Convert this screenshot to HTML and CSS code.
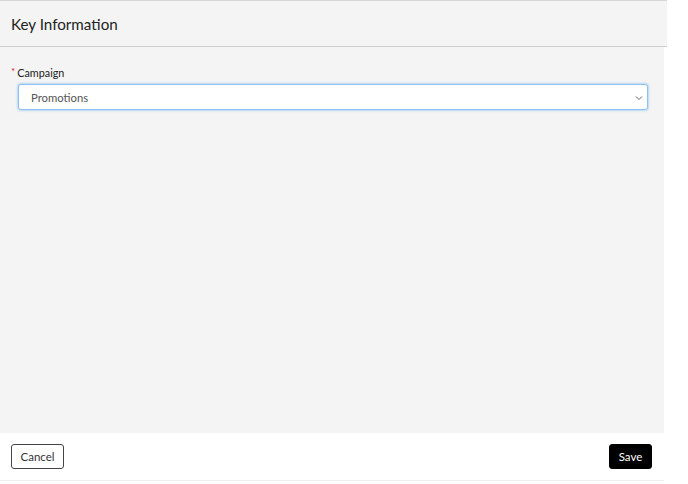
FILE: index.html
```html
<!DOCTYPE html>
<html>
<head>
<meta charset="utf-8">
<link rel="stylesheet" href="styles.css">
</head>
<body>
<div class="panel">
  <div class="header"><h1 class="title">Key Information</h1></div>
  <div class="content">
    <div class="field">
      <label class="label"><span class="req">*</span>Campaign</label>
      <div class="select">
        <span class="value">Promotions</span>
        <svg class="chev" width="8" height="6" viewBox="0 0 8 6"><path d="M1 1.5 L4 4.5 L7 1.5" fill="none" stroke="#666" stroke-width="1"/></svg>
      </div>
    </div>
  </div>
  <div class="footer">
    <button class="btn cancel">Cancel</button>
    <button class="btn save">Save</button>
  </div>
</div>
</body>
</html>
```
FILE: styles.css
```css
html, body { margin: 0; padding: 0; background: #fff; }
body { font-family: Lato, "Open Sans", sans-serif; color: #222; width: 688px; height: 484px; overflow: hidden; }
.panel { width: 664px; display: flex; flex-direction: column; }
.header { width: 667px; box-sizing: border-box; border-top: 1px solid #d6d6d6; border-bottom: 1px solid #cfcfcf; background: #f4f4f4; display: flex; align-items: center; padding-left: 11px; height: 47px; }
.title { margin: 0; font-size: 15.2px; font-weight: 400; color: #222; }
.content { background: #f4f4f4; height: 386px; padding: 19px 16px 0 11px; box-sizing: border-box; }
.field { display: flex; flex-direction: column; }
.label { font-size: 10.8px; color: #222; display: flex; align-items: flex-start; gap: 2px; height: 17px; }
.req { color: #e02020; font-size: 10px; line-height: 10px; }
.select { margin: 1px 0 0 7px; height: 26px; box-sizing: border-box; background: #fff; border: 1px solid #8cc2f2; border-radius: 3px; box-shadow: 0 0 2px 1px rgba(120,180,240,0.45); display: flex; align-items: center; justify-content: space-between; padding: 0 4px 0 12px; }
.value { font-size: 11.3px; color: #555; }
.chev { margin-top: 1px; }
.footer { height: 47px; background: #fff; border-bottom: 1px solid #f0f0f0; display: flex; justify-content: space-between; align-items: center; padding: 0 12px 0 11px; }
.btn { font-family: Lato, "Open Sans", sans-serif; font-size: 11.5px; height: 25px; border-radius: 3px; padding: 0; cursor: pointer; }
.cancel { background: #fff; color: #333; border: 1px solid #444; width: 53px; }
.save { background: #000; color: #fff; border: 1px solid #000; width: 43px; }
```
